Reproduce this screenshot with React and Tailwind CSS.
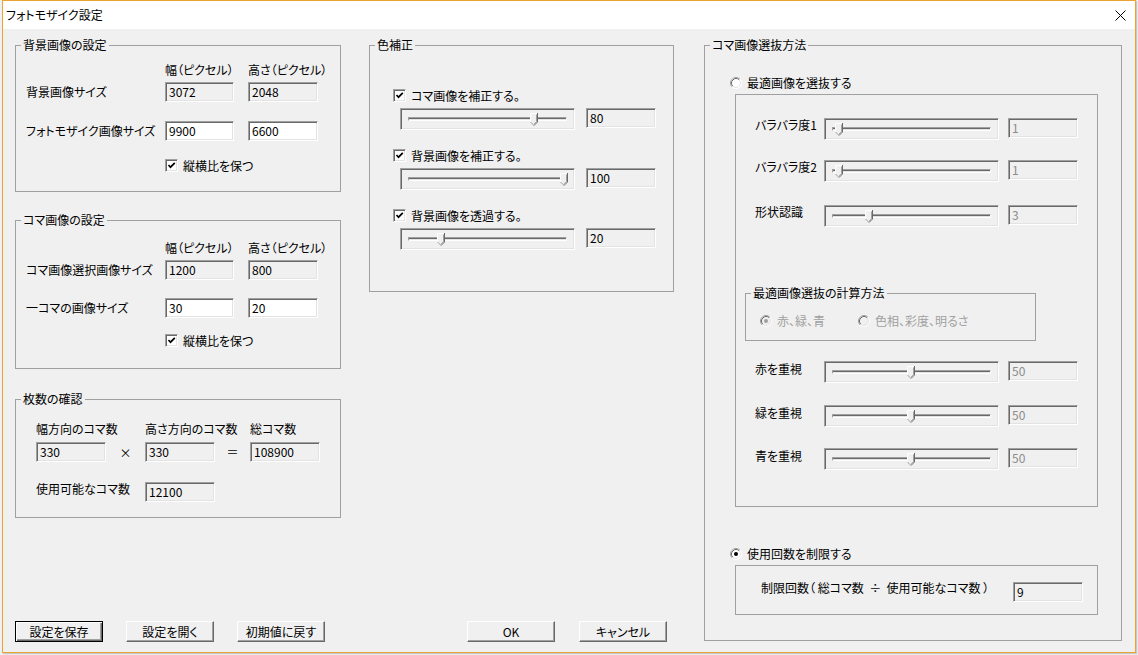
import React from "react";

const sunken =
  "border border-t-[#a0a0a0] border-l-[#a0a0a0] border-r-white border-b-white shadow-[inset_1px_1px_0_#696969,inset_-1px_-1px_0_#e3e3e3]";

function Field({ value, editable, disabled, w = "w-[70px]" }) {
  return (
    <div
      className={`${sunken} ${w} h-[20px] pl-[3px] pt-[2px] leading-[14px] ${
        editable ? "bg-white" : "bg-[#f0f0f0]"
      } ${disabled ? "text-[#8c8c8c]" : "text-black"}`}
    >
      {value}
    </div>
  );
}

function Check({ label }) {
  return (
    <div className="flex items-center h-[13px] gap-[5px]">
      <div className={`${sunken} w-[13px] h-[13px] bg-white flex items-center justify-center`}>
        <svg width="9" height="9" viewBox="0 0 9 9">
          <path d="M1.5 4 L3.5 6.2 L7.8 1.8" stroke="#000" strokeWidth="1.7" fill="none" />
        </svg>
      </div>
      <span className="leading-[14px]">{label}</span>
    </div>
  );
}

function Radio({ label, checked, disabled }) {
  return (
    <div className="flex items-center h-[12px] gap-[5px]">
      <svg width="12" height="12" viewBox="0 0 12 12">
        <circle cx="6" cy="6" r="5.5" fill={disabled ? "#f0f0f0" : "#fff"} />
        <path d="M2.11,9.89 A5.5,5.5 0 0 1 9.89,2.11" stroke="#a0a0a0" fill="none" />
        <path d="M9.89,2.11 A5.5,5.5 0 0 1 2.11,9.89" stroke="#fff" fill="none" />
        <path d="M2.82,9.18 A4.5,4.5 0 0 1 9.18,2.82" stroke="#696969" fill="none" />
        <path d="M9.18,2.82 A4.5,4.5 0 0 1 2.82,9.18" stroke="#e3e3e3" fill="none" />
        {checked && <circle cx="6" cy="6" r="2" fill={disabled ? "#a0a0a0" : "#000"} />}
      </svg>
      <span className={`leading-[14px] ${disabled ? "text-[#a0a0a0]" : ""}`}>{label}</span>
    </div>
  );
}

function Slider({ pos }) {
  return (
    <div className={`${sunken} relative w-[175px] h-[22px] bg-[#f0f0f0]`}>
      <div className="absolute left-[7px] top-[8px] w-[159px] h-[4px] border border-t-[#a0a0a0] border-l-[#a0a0a0] border-r-white border-b-white bg-[#e3e3e3] shadow-[inset_0_1px_0_#696969]" />
      <svg className="absolute top-[4px]" style={{ left: pos - 1 }} width="8" height="13" viewBox="0 0 8 13">
        <path d="M0.5,0.5 H7.5 V9 L4,12.5 L0.5,9 Z" fill="#f0f0f0" />
        <path d="M0.5,9 V0.5 H7" stroke="#fff" fill="none" />
        <path d="M7.5,0 V9 L4,12.5" stroke="#696969" fill="none" />
        <path d="M6.5,1.5 V8.6 L4,11.2" stroke="#a0a0a0" fill="none" />
        <path d="M0.5,9 L4,12.5" stroke="#a0a0a0" fill="none" />
      </svg>
    </div>
  );
}

function Btn({ label, def }) {
  return (
    <button
      className={`w-[88px] h-[21px] bg-[#f0f0f0] leading-[14px] text-center ${
        def
          ? "border border-[#000] shadow-[inset_1px_1px_0_#fff,inset_-1px_-1px_0_#696969,inset_-2px_-2px_0_#a0a0a0]"
          : "border border-t-white border-l-white border-r-[#696969] border-b-[#696969] shadow-[inset_-1px_-1px_0_#a0a0a0]"
      }`}
    >
      {label}
    </button>
  );
}

function Group({ title, className, children }) {
  return (
    <fieldset className={`border border-[#a0a0a0] ${className}`}>
      <legend className="ml-[5px] px-[2px] leading-[14px]">{title}</legend>
      {children}
    </fieldset>
  );
}

export default function App() {
  return (
    <div className="w-[1138px] h-[655px] bg-[#f0f0f0] text-[12px] text-black font-['Noto_Sans_CJK_JP',sans-serif] [font-feature-settings:'palt']">
      <div className="ml-[2px] w-[1134px] h-[653px] border border-[#eba433] bg-[#f0f0f0] shadow-[1px_1px_1px_#c8c8c8]">
        {/* title bar */}
        <div className="h-[28px] bg-white flex items-center justify-between pl-[3px] pr-[9px]">
          <span className="leading-[14px]">フォトモザイク設定</span>
          <svg width="11" height="11" viewBox="0 0 11 11">
            <path d="M0.5 0.5 L10.5 10.5 M10.5 0.5 L0.5 10.5" stroke="#000" strokeWidth="1" />
          </svg>
        </div>

        <div className="flex pl-[12px] pt-[9px]">
          {/* left column */}
          <div className="w-[326px] flex flex-col">
            <Group title="背景画像の設定" className="h-[154px]">
              <div className="flex mt-[11px] leading-[14px]">
                <div className="w-[149px]" />
                <div className="w-[83px]">幅（ピクセル）</div>
                <div>高さ（ピクセル）</div>
              </div>
              <div className="flex items-center mt-[5px]">
                <div className="ml-[10px] w-[139px]">背景画像サイズ</div>
                <Field value="3072" w="w-[69px]" />
                <div className="w-[14px]" />
                <Field value="2048" />
              </div>
              <div className="flex items-center mt-[19px]">
                <div className="ml-[10px] w-[139px]">フォトモザイク画像サイズ</div>
                <Field value="9900" editable w="w-[69px]" />
                <div className="w-[14px]" />
                <Field value="6600" editable />
              </div>
              <div className="ml-[149px] mt-[18px]">
                <Check label="縦横比を保つ" />
              </div>
            </Group>

            <Group title="コマ画像の設定" className="h-[156px] mt-[21px]">
              <div className="flex mt-[14px] leading-[14px]">
                <div className="w-[149px]" />
                <div className="w-[83px]">幅（ピクセル）</div>
                <div>高さ（ピクセル）</div>
              </div>
              <div className="flex items-center mt-[5px]">
                <div className="ml-[10px] w-[139px]">コマ画像選択画像サイズ</div>
                <Field value="1200" w="w-[69px]" />
                <div className="w-[14px]" />
                <Field value="800" />
              </div>
              <div className="flex items-center mt-[18px]">
                <div className="ml-[10px] w-[139px]">一コマの画像サイズ</div>
                <Field value="30" editable w="w-[69px]" />
                <div className="w-[14px]" />
                <Field value="20" editable />
              </div>
              <div className="ml-[149px] mt-[16px]">
                <Check label="縦横比を保つ" />
              </div>
            </Group>

            <Group title="枚数の確認" className="h-[126px] mt-[23px]">
              <div className="flex mt-[16px] leading-[14px] ml-[20px]">
                <div className="w-[109px]">幅方向のコマ数</div>
                <div className="w-[105px]">高さ方向のコマ数</div>
                <div>総コマ数</div>
              </div>
              <div className="flex items-center mt-[5px] ml-[20px]">
                <Field value="330" />
                <div className="w-[39px] text-center pt-[3px]">×</div>
                <Field value="330" />
                <div className="w-[35px] text-center">＝</div>
                <Field value="108900" />
              </div>
              <div className="flex items-start mt-[20px] ml-[20px]">
                <div className="w-[109px] leading-[14px]">使用可能なコマ数</div>
                <Field value="12100" />
              </div>
            </Group>

            <div className="flex gap-[23px] mt-[103px]">
              <Btn label="設定を保存" def />
              <Btn label="設定を開く" />
              <Btn label="初期値に戻す" />
            </div>
          </div>

          {/* middle column */}
          <div className="w-[305px] ml-[28px] flex flex-col">
            <Group title="色補正" className="h-[254px]">
              <div className="ml-[23px] mt-[37px]">
                <Check label="コマ画像を補正する。" />
              </div>
              <div className="flex ml-[30px] mt-[6px] gap-[11px]">
                <Slider pos={130} />
                <Field value="80" />
              </div>
              <div className="ml-[23px] mt-[19px]">
                <Check label="背景画像を補正する。" />
              </div>
              <div className="flex ml-[30px] mt-[6px] gap-[11px]">
                <Slider pos={160} />
                <Field value="100" />
              </div>
              <div className="ml-[23px] mt-[19px]">
                <Check label="背景画像を透過する。" />
              </div>
              <div className="flex ml-[30px] mt-[6px] gap-[11px]">
                <Slider pos={37} />
                <Field value="20" />
              </div>
            </Group>
            <div className="flex gap-[24px] ml-[98px] mt-[329px]">
              <Btn label="OK" />
              <Btn label="キャンセル" />
            </div>
          </div>

          {/* right column */}
          <div className="w-[418px] ml-[30px]">
            <Group title="コマ画像選抜方法" className="h-[603px]">
              <div className="ml-[25px] mt-[25px]">
                <Radio label="最適画像を選抜する" />
              </div>
              <div className="ml-[30px] mt-[5px] w-[363px] h-[413px] border border-[#a0a0a0]">
                {[
                  ["バラバラ度1", 11, "1", "mt-[23px]"],
                  ["バラバラ度2", 11, "1", "mt-[20px]"],
                  ["形状認識", 41, "3", "mt-[23px]"],
                ].map(([l, p, v, m]) => (
                  <div key={l} className={`flex items-start ml-[19px] ${m}`}>
                    <div className="w-[69px] leading-[14px]">{l}</div>
                    <Slider pos={p} />
                    <div className="ml-[9px]">
                      <Field value={v} disabled />
                    </div>
                  </div>
                ))}

                <Group title="最適画像選抜の計算方法" className="ml-[9px] mt-[59px] w-[291px] h-[55px]">
                  <div className="flex mt-[15px] ml-[14px]">
                    <div className="w-[98px]">
                      <Radio label="赤、緑、青" checked disabled />
                    </div>
                    <Radio label="色相、彩度、明るさ" disabled />
                  </div>
                </Group>

                {[
                  ["赤を重視", "mt-[20px]"],
                  ["緑を重視", "mt-[22px]"],
                  ["青を重視", "mt-[21px]"],
                ].map(([l, m]) => (
                  <div key={l} className={`flex items-start ml-[19px] ${m}`}>
                    <div className="w-[69px] leading-[14px] pt-[1px]">{l}</div>
                    <Slider pos={83} />
                    <div className="ml-[9px]">
                      <Field value="50" disabled />
                    </div>
                  </div>
                ))}
              </div>

              <div className="ml-[25px] mt-[41px]">
                <Radio label="使用回数を制限する" checked />
              </div>
              <div className="ml-[30px] mt-[5px] w-[363px] h-[50px] border border-[#a0a0a0] flex items-start">
                <div className="ml-[25px] mt-[15px] w-[252px] leading-[14px] whitespace-pre">
                  制限回数（ 総コマ数  ÷  使用可能なコマ数 ）
                </div>
                <div className="mt-[16px]">
                  <Field value="9" />
                </div>
              </div>
            </Group>
          </div>
        </div>
      </div>
    </div>
  );
}
